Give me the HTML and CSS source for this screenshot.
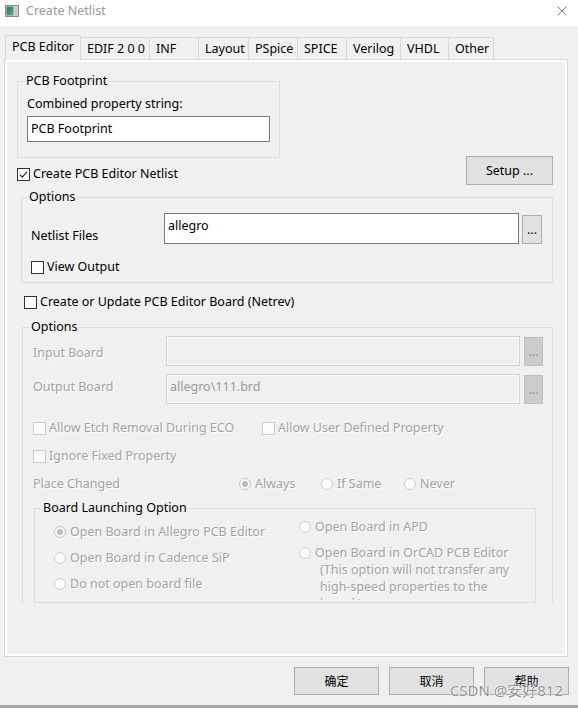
FILE: index.html
```html
<!DOCTYPE html>
<html lang="en">
<head>
    <meta charset="UTF-8">
    <meta name="viewport" content="width=device-width, initial-scale=1.0">
    <title>Create Netlist</title>
    <link rel="stylesheet" href="styles.css">
</head>
<body>
<div class="window">
    <header class="titlebar">
        <svg class="app-icon" width="14" height="12" viewBox="0 0 14 12">
            <defs>
                <linearGradient id="screen" x1="0" y1="0" x2="1" y2="1">
                    <stop offset="0" stop-color="#2f6f8f"/>
                    <stop offset="1" stop-color="#5fae6a"/>
                </linearGradient>
            </defs>
            <rect x="0.5" y="0.5" width="13" height="11" fill="#dcdcdc" stroke="#8a8a8a"/>
            <rect x="1.5" y="1.5" width="7" height="9" fill="url(#screen)"/>
            <rect x="9.5" y="1.5" width="3" height="9" fill="#c8c8c8"/>
        </svg>
        <span class="title">Create Netlist</span>
        <svg class="close" width="10" height="10" viewBox="0 0 10 10">
            <path d="M0.5 0.5 L9.5 9.5 M9.5 0.5 L0.5 9.5" stroke="#7a7a7a" stroke-width="1" fill="none"/>
        </svg>
    </header>

    <div class="dialog">
        <div class="tabs">
            <div class="tab active">PCB Editor</div>
            <div class="tab">EDIF 2 0 0</div>
            <div class="tab">INF</div>
            <div class="tab">Layout</div>
            <div class="tab">PSpice</div>
            <div class="tab">SPICE</div>
            <div class="tab">Verilog</div>
            <div class="tab">VHDL</div>
            <div class="tab">Other</div>
        </div>

        <div class="panel">
            <div class="scroll">
                <fieldset class="group footprint">
                    <legend>PCB Footprint</legend>
                    <div class="label">Combined property string:</div>
                    <div class="edit">PCB Footprint</div>
                </fieldset>

                <div class="netlist-row">
                    <div class="check">
                        <span class="box">
                            <svg width="11" height="11" viewBox="0 0 11 11">
                                <polyline points="1.8,5.6 4.3,8.1 9.2,2.6" fill="none" stroke="#222" stroke-width="1.2"/>
                            </svg>
                        </span>
                        Create PCB Editor Netlist
                    </div>
                    <button class="btn setup">Setup ...</button>
                </div>

                <fieldset class="group options">
                    <legend>Options</legend>
                    <div class="file-row">
                        <span class="field-label">Netlist Files</span>
                        <div class="edit">allegro</div>
                        <button class="btn browse">...</button>
                    </div>
                    <div class="check view-output"><span class="box"></span>View Output</div>
                </fieldset>

                <div class="check netrev"><span class="box"></span>Create or Update PCB Editor Board (Netrev)</div>

                <fieldset class="group board">
                    <legend>Options</legend>
                    <div class="file-row input">
                        <span class="field-label off">Input Board</span>
                        <div class="edit"></div>
                        <button class="btn browse">...</button>
                    </div>
                    <div class="file-row output">
                        <span class="field-label off">Output Board</span>
                        <div class="edit">allegro\111.brd</div>
                        <button class="btn browse">...</button>
                    </div>

                    <div class="check-row">
                        <div class="check off"><span class="box"></span>Allow Etch Removal During ECO</div>
                        <div class="check off"><span class="box"></span>Allow User Defined Property</div>
                    </div>
                    <div class="check off ignore"><span class="box"></span>Ignore Fixed Property</div>

                    <div class="place-row">
                        <span class="off">Place Changed</span>
                        <div class="radio off"><span class="dot on"></span>Always</div>
                        <div class="radio off"><span class="dot"></span>If Same</div>
                        <div class="radio off"><span class="dot"></span>Never</div>
                    </div>

                    <fieldset class="group launch">
                        <legend>Board Launching Option</legend>
                        <div class="launch-grid">
                            <div class="launch-col left">
                                <div class="radio off"><span class="dot on"></span>Open Board in Allegro PCB Editor</div>
                                <div class="radio off"><span class="dot"></span>Open Board in Cadence SiP</div>
                                <div class="radio off"><span class="dot"></span>Do not open board file</div>
                            </div>
                            <div class="launch-col right">
                                <div class="radio off"><span class="dot"></span>Open Board in APD</div>
                                <div class="radio off"><span class="dot"></span>Open Board in OrCAD PCB Editor</div>
                                <div class="note off">(This option will not transfer any high-speed properties to the board.)</div>
                            </div>
                        </div>
                    </fieldset>
                </fieldset>
            </div>
        </div>
    </div>

    <div class="footer">
        <button class="btn">确定</button>
        <button class="btn">取消</button>
        <button class="btn">帮助</button>
    </div>

    <div class="watermark">CSDN @安好812</div>
</div>
</body>
</html>
```

FILE: styles.css
```css
* {
    box-sizing: border-box;
}
html {
    background: #a8a8a8;
}
body {
    margin: 0;
    font-family: "Noto Sans", "Noto Sans CJK SC", sans-serif;
    font-size: 12.5px;
    line-height: 16px;
    color: #000;
}
.window {
    position: relative;
    width: 578px;
    height: 705px;
    background: #f0f0f0;
}
.titlebar {
    height: 26px;
    display: flex;
    align-items: center;
    padding: 0 11px 4px 5px;
    background: #fff;
}
.app-icon {
    margin-right: 7px;
    flex: none;
}
.title {
    flex: 1;
    color: #999;
}
.dialog {
    padding: 9px 10px 0 4px;
}
.tabs {
    display: grid;
    grid-template-columns: 76px 69px 49px 50px 49px 49px 54px 48px 45px;
    align-items: end;
    height: 24px;
    margin-left: 1px;
}
.tab {
    height: 22px;
    display: flex;
    align-items: center;
    padding: 1px 6px 0;
    border-top: 1px solid #d9d9d9;
    border-right: 1px solid #d9d9d9;
    white-space: nowrap;
}
.tab.active {
    position: relative;
    z-index: 1;
    height: 25px;
    margin-bottom: -1px;
    padding-bottom: 3px;
    border-left: 1px solid #d9d9d9;
    background: #f0f0f0;
}
.panel {
    height: 598px;
    border: 1px solid #d9d9d9;
    box-shadow: inset 0 0 0 2px #fff;
}
.scroll {
    height: 543px;
    overflow: hidden;
    padding: 13px 14px 0 12px;
}

/* group boxes */
.group {
    margin: 0;
    padding: 0 9px;
    min-width: 0;
    border: 1px solid #dcdcdc;
}
.group legend {
    padding: 0 1px;
    line-height: 16px;
}
.footprint {
    width: 263px;
    padding-bottom: 15px;
}
.footprint legend {
    margin-left: -2px;
}
.footprint .label {
    margin-top: 7px;
}
.edit {
    height: 26px;
    margin-top: 4px;
    padding: 4px 3px;
    background: #fff;
    border: 1px solid #7a7a7a;
    white-space: nowrap;
}
.btn {
    padding: 0;
    font: inherit;
    color: #000;
    background: #e1e1e1;
    border: 1px solid #adadad;
}
.netlist-row {
    display: flex;
    justify-content: space-between;
    align-items: flex-start;
    margin-top: -2px;
}
.netlist-row .check {
    margin-top: 10px;
}
.setup {
    width: 87px;
    height: 29px;
}

/* checkboxes and radios */
.check, .radio {
    display: flex;
    align-items: center;
    white-space: nowrap;
}
.box {
    display: flex;
    flex: none;
    width: 13px;
    height: 13px;
    margin-right: 3px;
    background: #fff;
    border: 1px solid #333;
}
.dot {
    display: flex;
    align-items: center;
    justify-content: center;
    flex: none;
    width: 12px;
    height: 12px;
    margin-right: 4px;
    border-radius: 50%;
    background: #fbfbfb;
    border: 1px solid #cfcfcf;
}
.dot.on {
    border-color: #c2c2c2;
}
.dot.on::after {
    content: "";
    width: 6px;
    height: 6px;
    border-radius: 50%;
    background: #bdbdbd;
}
.off {
    color: #a3a3a3;
    text-shadow: 1px 1px 0 #fff;
}
.off .box {
    border-color: #cccccc;
    background: #fbfbfb;
}

/* netlist options */
.options {
    margin: 4px 0 0 4px;
    padding: 0 10px 7px 9px;
}
.options legend, .board legend {
    margin-left: -3px;
}
.file-row {
    display: flex;
    align-items: flex-start;
    margin-top: 8px;
}
.field-label {
    flex: none;
    width: 133px;
    margin-top: 15px;
}
.file-row .edit {
    flex: 1;
    height: 31px;
    margin-top: 0;
}
.browse {
    flex: none;
    width: 20px;
    height: 29px;
    margin: 2px 0 0 3px;
    line-height: 12px;
}
.view-output {
    margin-top: 15px;
}
.netrev {
    margin: 11px 0 0 7px;
}

/* disabled board options */
.board {
    margin: 9px 0 0 5px;
    padding: 0 9px 10px 10px;
}
.board .file-row.input {
    margin-top: 1px;
}
.board .file-row .edit {
    height: 30px;
    color: #9a9a9a;
    background: #f0f0f0;
    border-color: #d2d2d2;
    box-shadow: inset 0 0 0 1px #f7f7f7;
}
.board .field-label {
    margin-top: 9px;
}
.board .output .field-label {
    margin-top: 5px;
}
.board .browse {
    width: 19px;
    margin: 1px 0 0 4px;
    color: #8f8f8f;
    background: #cccccc;
    border-color: #bfbfbf;
}
.check-row {
    display: grid;
    grid-template-columns: 229px auto;
    margin-top: 16px;
}
.ignore {
    margin-top: 12px;
}
.place-row {
    display: grid;
    grid-template-columns: 206px 82px 83px auto;
    margin-top: 12px;
}
.launch {
    width: 502px;
    margin: 8px 0 0 1px;
    padding: 0 0 2px 7px;
}
.launch legend {
    margin-left: 0;
}
.launch-grid {
    display: grid;
    grid-template-columns: 245px 211px;
    margin-left: 12px;
}
.launch-col {
    display: flex;
    flex-direction: column;
    gap: 10px;
    overflow: hidden;
}
.launch-col.left {
    padding-top: 8px;
}
.launch-col.right {
    padding-top: 3px;
}
.note {
    width: 190px;
    height: 39px;
    margin: -10px 0 0 21px;
    overflow: hidden;
    line-height: 17px;
    white-space: normal;
}

/* dialog buttons */
.footer {
    display: flex;
    justify-content: flex-end;
    gap: 10px;
    padding: 10px 9px 0 0;
}
.footer .btn {
    width: 85px;
    height: 28px;
    font-family: "Noto Sans CJK SC", sans-serif;
    font-size: 12px;
}
.watermark {
    position: absolute;
    top: 680px;
    right: 15px;
    font-family: "Noto Sans", "Noto Sans CJK SC", sans-serif;
    font-size: 15px;
    line-height: 20px;
    color: rgba(120, 120, 120, 0.8);
    text-shadow: 0 0 2px #fff, 0 0 1px #fff;
}
```
